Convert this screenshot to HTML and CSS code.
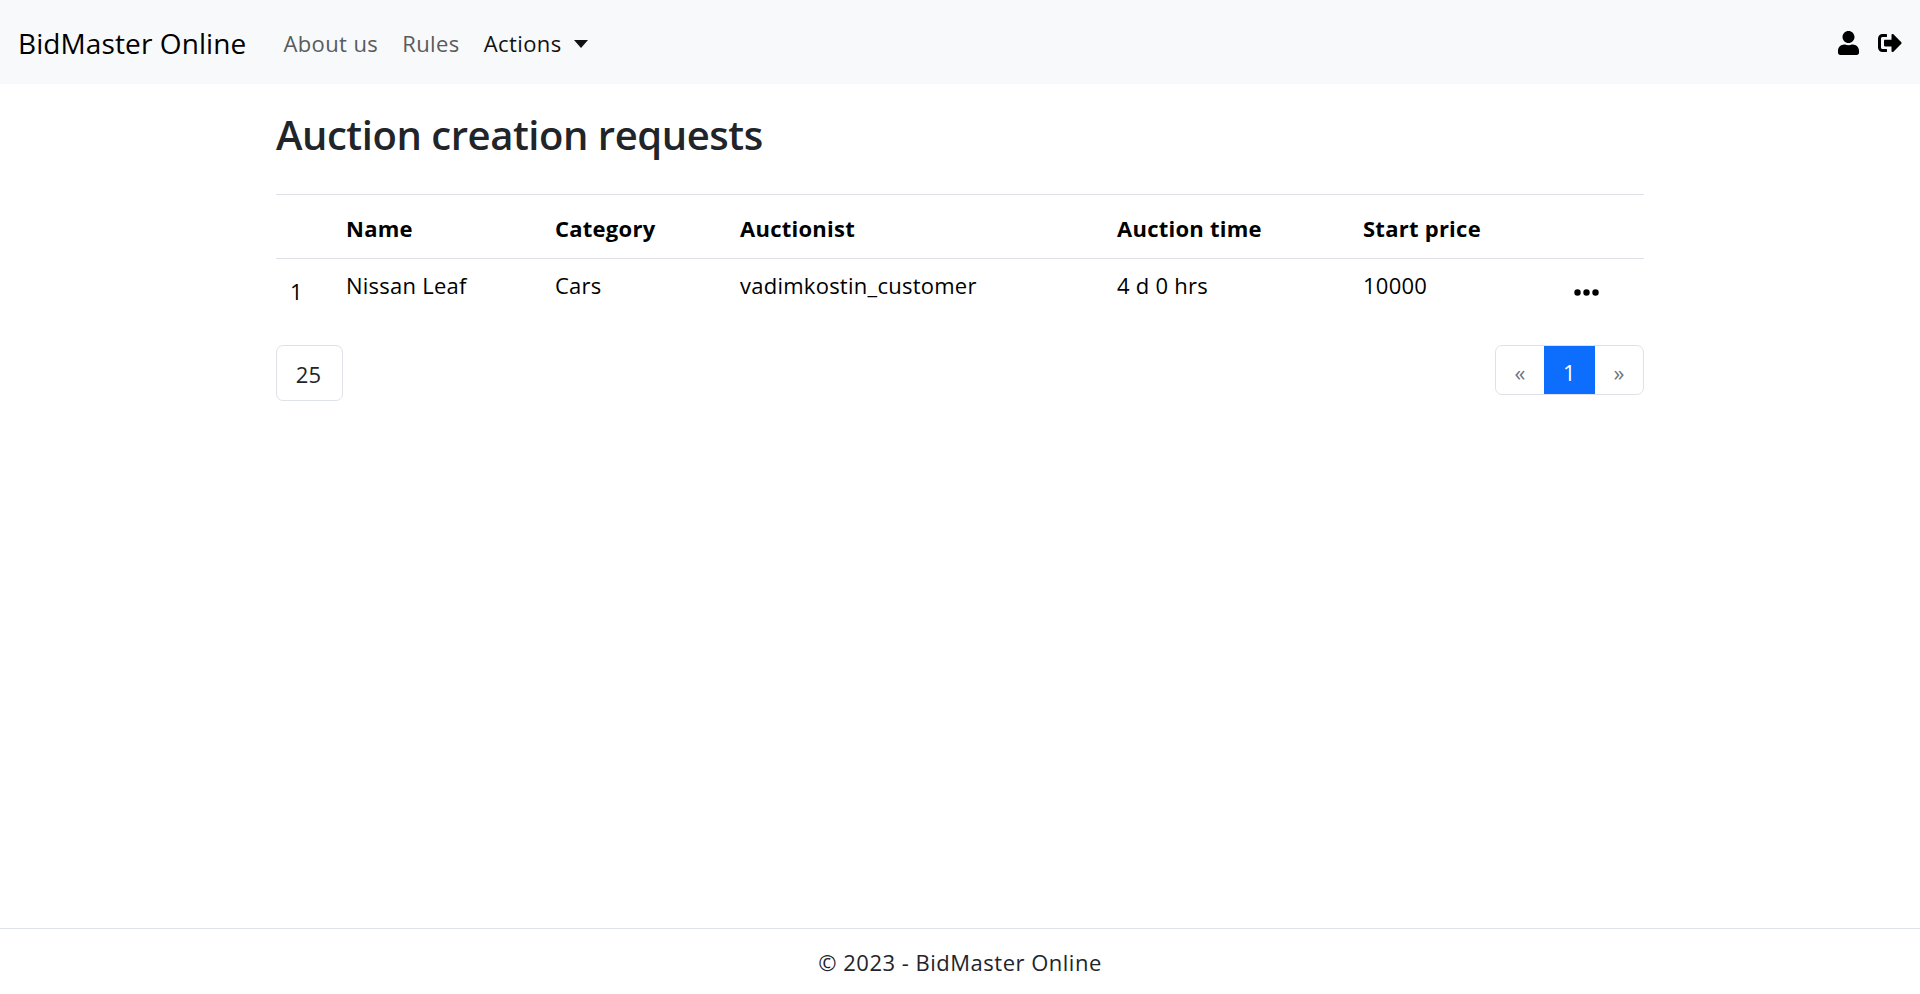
FILE: index.html
```html
<!DOCTYPE html>
<html lang="en">
<head>
    <meta charset="UTF-8">
    <meta name="viewport" content="width=device-width, initial-scale=1.0">
    <title>Auction creation requests</title>
    <link rel="stylesheet" href="styles.css">
</head>
<body>
    <!-- Navbar -->
    <nav class="navbar">
        <a class="brand" href="#">BidMaster Online</a>
        <ul class="nav-links">
            <li><a class="nav-link" href="#">About us</a></li>
            <li><a class="nav-link" href="#">Rules</a></li>
            <li><a class="nav-link active dropdown" href="#">Actions</a></li>
        </ul>
        <div class="nav-icons">
            <a class="nav-icon" href="#">
                <svg width="21" height="24" viewBox="0 0 448 512"><path d="M224 256c70.700 0 128-57.300 128-128S294.700 0 224 0 96 57.300 96 128s57.300 128 128 128zm89.600 32h-16.700c-22.200 10.200-46.900 16-72.900 16s-50.600-5.800-72.900-16h-16.700C60.200 288 0 348.200 0 422.400V464c0 26.500 21.500 48 48 48h352c26.500 0 48-21.500 48-48v-41.600c0-74.200-60.200-134.400-134.400-134.400z"/></svg>
            </a>
            <a class="nav-icon" href="#">
                <svg width="24" height="24" viewBox="0 0 512 512"><path d="M497 273L329 441c-15 15-41 4.500-41-17v-96H152c-13.300 0-24-10.700-24-24v-96c0-13.300 10.700-24 24-24h136V88c0-21.400 25.900-32 41-17l168 168c9.300 9.400 9.300 24.600 0 34zM192 436v-40c0-6.600-5.400-12-12-12H96c-17.700 0-32-14.300-32-32V160c0-17.700 14.300-32 32-32h84c6.600 0 12-5.400 12-12V76c0-6.600-5.400-12-12-12H96c-53 0-96 43-96 96v192c0 53 43 96 96 96h84c6.600 0 12-5.400 12-12z"/></svg>
            </a>
        </div>
    </nav>

    <!-- Requests -->
    <main class="container">
        <h1 class="title">Auction creation requests</h1>
        <table class="table">
            <thead>
                <tr>
                    <th class="col-num"></th>
                    <th class="col-name">Name</th>
                    <th class="col-category">Category</th>
                    <th class="col-auctionist">Auctionist</th>
                    <th class="col-time">Auction time</th>
                    <th class="col-price">Start price</th>
                    <th></th>
                </tr>
            </thead>
            <tbody>
                <tr>
                    <td class="cell-num">1</td>
                    <td>Nissan Leaf</td>
                    <td>Cars</td>
                    <td>vadimkostin_customer</td>
                    <td>4 d 0 hrs</td>
                    <td>10000</td>
                    <td class="cell-menu">
                        <svg class="dots" width="25" height="7" viewBox="0 0 25 7"><circle cx="3.500" cy="3.500" r="3.200"/><circle cx="12.500" cy="3.500" r="3.200"/><circle cx="21.500" cy="3.500" r="3.200"/></svg>
                    </td>
                </tr>
            </tbody>
        </table>
        <div class="table-footer">
            <div class="page-size">25</div>
            <ul class="pagination">
                <li class="page-item">«</li>
                <li class="page-item active">1</li>
                <li class="page-item">»</li>
            </ul>
        </div>
    </main>

    <footer class="footer">© 2023 - BidMaster Online</footer>
</body>
</html>
```

FILE: styles.css
```css
* {
    box-sizing: border-box;
}

html, body {
    height: 100%;
}

body {
    font-family: "Open Sans", "Liberation Sans", sans-serif;
    font-size: 22px;
    letter-spacing: 0.25px;
    color: #212529;
    margin: 0;
    display: flex;
    flex-direction: column;
    background: #fff;
}

a {
    color: inherit;
    text-decoration: none;
}

.navbar {
    height: 84px;
    flex-shrink: 0;
    background: #f8f9fa;
    display: flex;
    align-items: center;
    padding: 2px 18px 0;
}

.brand {
    font-size: 28px;
    letter-spacing: 0.1px;
    color: #000;
    margin-right: 37px;
}

.nav-links {
    display: flex;
    list-style: none;
    margin: 0;
    padding: 0;
    gap: 24px;
    letter-spacing: 0.4px;
}

.nav-link {
    color: #595b5d;
}

.nav-link.active {
    color: #111;
}

.dropdown::after {
    content: "";
    display: inline-block;
    margin-left: 12px;
    vertical-align: 4px;
    border-top: 8px solid;
    border-left: 7px solid transparent;
    border-right: 7px solid transparent;
}

.nav-icons {
    margin-left: auto;
    display: flex;
    align-items: center;
    gap: 19px;
}

.nav-icon {
    display: flex;
}

.container {
    width: 1368px;
    margin: 0 auto;
    flex: 1;
}

.title {
    font-size: 40px;
    font-weight: 600;
    letter-spacing: -0.45px;
    line-height: 48px;
    margin: 27px 0 35px;
}

.table {
    width: 100%;
    border-collapse: separate;
    border-spacing: 0;
    table-layout: fixed;
    color: #000;
    border-top: 1px solid #dee2e6;
}

.table th {
    text-align: left;
    font-weight: 700;
    height: 64px;
    padding: 2px 14px 0;
    border-bottom: 1px solid #dee2e6;
}

.table td {
    vertical-align: top;
    padding: 11px 14px;
    height: 62px;
}

.col-num { width: 56px; }
.col-name { width: 209px; }
.col-category { width: 185px; }
.col-auctionist { width: 377px; }
.col-time { width: 246px; }
.col-price { width: 181px; }

.table .cell-num {
    padding-top: 17px;
}

.table .cell-menu {
    padding: 30px 0 0 44px;
}

.dots {
    display: block;
}

.table-footer {
    display: flex;
    justify-content: space-between;
    align-items: flex-start;
    margin-top: 24px;
}

.page-size {
    width: 67px;
    height: 56px;
    padding: 2px 2px 0 0;
    border: 1px solid #dee2e6;
    border-radius: 7px;
    display: flex;
    align-items: center;
    justify-content: center;
}

.pagination {
    display: flex;
    list-style: none;
    margin: 0;
    padding: 0;
    height: 50px;
    border: 1px solid #dee2e6;
    border-radius: 7px;
    overflow: hidden;
}

.page-item {
    width: 48px;
    padding-top: 3px;
    display: flex;
    align-items: center;
    justify-content: center;
    color: #6c757d;
}

.page-item.active {
    width: 51px;
    margin: -1px 0;
    background: #0d6efd;
    color: #fff;
}

.footer {
    height: 66px;
    flex-shrink: 0;
    border-top: 1px solid #dee2e6;
    letter-spacing: 0.5px;
    display: flex;
    align-items: center;
    justify-content: center;
}
```
